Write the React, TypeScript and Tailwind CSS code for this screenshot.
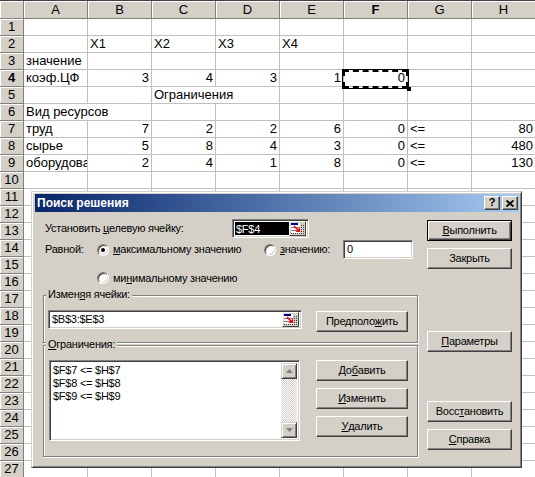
import React from 'react';

const COLS = ['A', 'B', 'C', 'D', 'E', 'F', 'G', 'H'];
type V = string | number | null;
const DATA: Record<number, V[]> = {
  2: [null, 'X1', 'X2', 'X3', 'X4'],
  3: ['значение'],
  4: ['коэф.ЦФ', 3, 4, 3, 1, 0],
  5: [null, null, 'Ограничения'],
  6: ['Вид ресурсов'],
  7: ['труд', 7, 2, 2, 6, 0, '<=', 80],
  8: ['сырье', 5, 8, 4, 3, 0, '<=', 480],
  9: ['оборудова', 2, 4, 1, 8, 0, '<=', 130],
};
const OVERFLOW: Record<string, boolean> = { '5-2': true, '6-0': true };

const HEAD =
  'bg-[#d4d0c8] border-r border-b border-[#808080] shadow-[inset_1px_1px_0_#fff] flex items-center justify-center shrink-0';

function Sheet() {
  const rows = Array.from({ length: 27 }, (_, i) => i + 1);
  return (
    <div className="relative w-[535px] h-[477px] overflow-hidden bg-white text-black text-[13px] font-['Liberation_Sans',Arial,sans-serif]">
      <div className="h-px bg-[#404040]" />
      <div className="flex h-[18px]">
        <div className={`w-[24px] ${HEAD}`} />
        {COLS.map((c) => (
          <div key={c} className={`w-[64px] ${HEAD} ${c === 'F' ? 'font-bold' : ''}`}>
            {c}
          </div>
        ))}
      </div>
      {rows.map((r) => (
        <div key={r} className="flex h-[17px]">
          <div className={`w-[24px] ${HEAD} ${r === 4 ? 'font-bold' : ''}`}>{r}</div>
          {COLS.map((c, ci) => {
            const v = DATA[r]?.[ci];
            const num = typeof v === 'number';
            const ov = OVERFLOW[`${r}-${ci}`];
            return (
              <div
                key={c}
                className={`w-[64px] shrink-0 border-b border-[#c0c0c0] px-[2px] leading-[16px] whitespace-nowrap ${
                  ov ? 'overflow-visible' : 'border-r overflow-hidden'
                } ${num ? 'text-right' : 'text-left'}`}
              >
                {v ?? ''}
              </div>
            );
          })}
        </div>
      ))}
      {/* active cell F4 with marching ants */}
      <div className="absolute left-[342px] top-[69px] w-[67px] h-[20px] border border-black">
        <div className="w-full h-full border-2 border-dashed border-black" />
        <div className="absolute right-[-3px] bottom-[-3px] w-[4px] h-[4px] bg-black" />
      </div>
      <Dialog />
    </div>
  );
}

function Btn({
  children,
  def = false,
  w = 'w-[85px]',
  className = '',
}: {
  children: React.ReactNode;
  def?: boolean;
  w?: string;
  className?: string;
}) {
  return (
    <div
      className={`${w} h-[21px] shrink-0 flex items-center justify-center ${
        def
          ? 'border border-black shadow-[inset_1px_1px_0_#fff,inset_-1px_-1px_0_#404040,inset_-2px_-2px_0_#808080]'
          : 'border border-t-white border-l-white border-r-[#404040] border-b-[#404040] shadow-[inset_-1px_-1px_0_#808080]'
      } ${className}`}
    >
      {children}
    </div>
  );
}

const SUNKEN =
  'border border-t-[#808080] border-l-[#808080] border-r-white border-b-white shadow-[inset_1px_1px_0_#404040,inset_-1px_-1px_0_#d4d0c8] bg-white';

function RefButton() {
  return (
    <div className="w-[17px] h-[15px] shrink-0 bg-[#d4d0c8] border border-t-white border-l-white border-r-[#404040] border-b-[#404040] flex items-center justify-center">
      <svg width="13" height="11" viewBox="0 0 13 11">
        <rect x="0" y="0" width="9" height="10" fill="#fff" />
        <rect x="0" y="0" width="7" height="2" fill="#000080" />
        <line x1="0" y1="4.5" x2="9" y2="4.5" stroke="#808080" />
        <line x1="0" y1="7.5" x2="9" y2="7.5" stroke="#808080" />
        <line x1="10.5" y1="2" x2="10.5" y2="11" stroke="#404040" strokeDasharray="1 1" />
        <line x1="12.5" y1="2" x2="12.5" y2="11" stroke="#404040" strokeDasharray="1 1" />
        <line x1="0" y1="10.5" x2="13" y2="10.5" stroke="#404040" strokeDasharray="1 1" />
        <line x1="3" y1="3" x2="7.5" y2="7.5" stroke="#ff0000" strokeWidth="1.6" />
        <polygon points="9,9 4.5,9 9,4.5" fill="#ff0000" />
      </svg>
    </div>
  );
}

function Radio({ checked = false }: { checked?: boolean }) {
  return (
    <span className="w-[12px] h-[12px] shrink-0 rounded-full bg-white border border-t-[#808080] border-l-[#808080] border-r-white border-b-white shadow-[inset_1px_1px_0_#404040,inset_-1px_-1px_0_#d4d0c8] flex items-center justify-center">
      {checked && <span className="w-[4px] h-[4px] rounded-full bg-black" />}
    </span>
  );
}

function Group({
  label,
  h,
  className = '',
  children,
}: {
  label: React.ReactNode;
  h: string;
  className?: string;
  children: React.ReactNode;
}) {
  return (
    <div
      className={`relative w-[375px] ${h} border border-[#808080] shadow-[inset_1px_1px_0_#fff,1px_1px_0_#fff] ${className}`}
    >
      <span className="absolute top-[-8px] left-[2px] px-[2px] bg-[#d4d0c8] leading-[13px]">{label}</span>
      {children}
    </div>
  );
}

function ScrollArrow({ up }: { up: boolean }) {
  return (
    <div className="w-[16px] h-[16px] bg-[#d4d0c8] border border-t-[#d4d0c8] border-l-[#d4d0c8] border-r-[#404040] border-b-[#404040] shadow-[inset_1px_1px_0_#fff,inset_-1px_-1px_0_#808080] flex items-center justify-center">
      <svg width="7" height="4" viewBox="0 0 7 4">
        {up ? (
          <polygon points="3.5,0 7,4 0,4" fill="#808080" />
        ) : (
          <polygon points="0,0 7,0 3.5,4" fill="#808080" />
        )}
      </svg>
    </div>
  );
}

function Dialog() {
  return (
    <div className="absolute left-[31px] top-[191px] w-[491px] h-[277px] bg-[#d4d0c8] border border-t-[#d4d0c8] border-l-[#d4d0c8] border-r-[#404040] border-b-[#404040] shadow-[inset_1px_1px_0_#fff,inset_-1px_-1px_0_#808080] pt-[2px] pl-[3px] pr-[2px] text-[11px] leading-[13px] tracking-[-0.25px] font-['Liberation_Sans',Arial,sans-serif]">
      {/* Title bar */}
      <div className="h-[18px] flex items-center pl-[2px] pr-[1px] bg-gradient-to-r from-[#0a246a] to-[#a6caf0]">
        <span className="text-white font-bold text-[12px] tracking-normal">Поиск решения</span>
        <div className="ml-auto flex gap-[2px]">
          <div className="w-[16px] h-[14px] bg-[#d4d0c8] border border-t-white border-l-white border-r-[#404040] border-b-[#404040] shadow-[inset_-1px_-1px_0_#808080] flex items-center justify-center font-bold text-[11px] leading-[11px] pb-[1px]">
            ?
          </div>
          <div className="w-[16px] h-[14px] bg-[#d4d0c8] border border-t-white border-l-white border-r-[#404040] border-b-[#404040] shadow-[inset_-1px_-1px_0_#808080] flex items-center justify-center">
            <svg width="8" height="7" viewBox="0 0 8 7">
              <path d="M0.5 0.5 L7.5 6.5 M7.5 0.5 L0.5 6.5" stroke="#000" strokeWidth="1.8" />
            </svg>
          </div>
        </div>
      </div>

      <div className="flex">
        {/* left column */}
        <div className="w-[392px] pl-[8px]">
          <div className="flex items-center mt-[7px] h-[19px]">
            <span className="w-[189px] pl-[2px]">
              Установить <u>ц</u>елевую ячейку:
            </span>
            <div className={`w-[77px] h-[19px] flex items-center p-[2px] ${SUNKEN}`}>
              <div className="flex-1 h-full bg-black text-white pl-[1px] leading-[15px]">$F$4</div>
              <RefButton />
            </div>
          </div>

          <div className="flex items-center mt-[2px] h-[19px]">
            <span className="w-[54px] pl-[2px]">Равной:</span>
            <div className="w-[167px] flex items-center gap-[4px]">
              <Radio checked />
              <span>
                <u>м</u>аксимальному значению
              </span>
            </div>
            <div className="w-[79px] flex items-center gap-[4px]">
              <Radio />
              <span>
                <u>з</u>начению:
              </span>
            </div>
            <div className={`w-[70px] h-[19px] pl-[3px] flex items-center ${SUNKEN}`}>0</div>
          </div>

          <div className="flex items-center mt-[12px] h-[14px] pl-[54px] gap-[4px]">
            <Radio />
            <span>
              ми<u>н</u>имальному значению
            </span>
          </div>

          <Group
            className="mt-[10px]"
            h="h-[48px]"
            label={
              <>
                Измен<u>я</u>я ячейки:
              </>
            }
          >
            <div className="flex items-start ml-[4px] mt-[14px]">
              <div className={`w-[254px] h-[19px] flex items-center p-[2px] ${SUNKEN}`}>
                <div className="flex-1 pl-[1px]">$B$3:$E$3</div>
                <RefButton />
              </div>
              <Btn w="w-[92px]" className="ml-[14px] mt-[1px]">
                Предполо<u>ж</u>ить
              </Btn>
            </div>
          </Group>

          <Group
            className="mt-[2px]"
            h="h-[112px]"
            label={
              <>
                <u>О</u>граничения:
              </>
            }
          >
            <div className="flex items-start ml-[5px] mt-[14px]">
              <div className={`w-[251px] h-[81px] p-[2px] flex ${SUNKEN}`}>
                <div className="flex-1 pl-[1px] pt-[1px]">
                  <div className="h-[13px]">$F$7 &lt;= $H$7</div>
                  <div className="h-[13px]">$F$8 &lt;= $H$8</div>
                  <div className="h-[13px]">$F$9 &lt;= $H$9</div>
                </div>
                <div className="w-[16px] flex flex-col bg-[repeating-conic-gradient(#d4d0c8_0_25%,#ffffff_0_50%)] bg-[length:2px_2px]">
                  <ScrollArrow up />
                  <div className="flex-1" />
                  <ScrollArrow up={false} />
                </div>
              </div>
              <div className="ml-[16px] flex flex-col gap-[7px]">
                <Btn w="w-[92px]">
                  До<u>б</u>авить
                </Btn>
                <Btn w="w-[92px]">
                  <u>И</u>зменить
                </Btn>
                <Btn w="w-[92px]">
                  <u>У</u>далить
                </Btn>
              </div>
            </div>
          </Group>
        </div>

        {/* right column */}
        <div className="w-[85px] flex flex-col">
          <Btn def className="mt-[8px]">
            <u>В</u>ыполнить
          </Btn>
          <Btn className="mt-[7px]">Закрыть</Btn>
          <Btn className="mt-[62px]">
            <u>П</u>араметры
          </Btn>
          <Btn className="mt-[49px]">
            Восс<u>т</u>ановить
          </Btn>
          <Btn className="mt-[7px]">
            <u>С</u>правка
          </Btn>
        </div>
      </div>
    </div>
  );
}

export default function App() {
  return <Sheet />;
}
